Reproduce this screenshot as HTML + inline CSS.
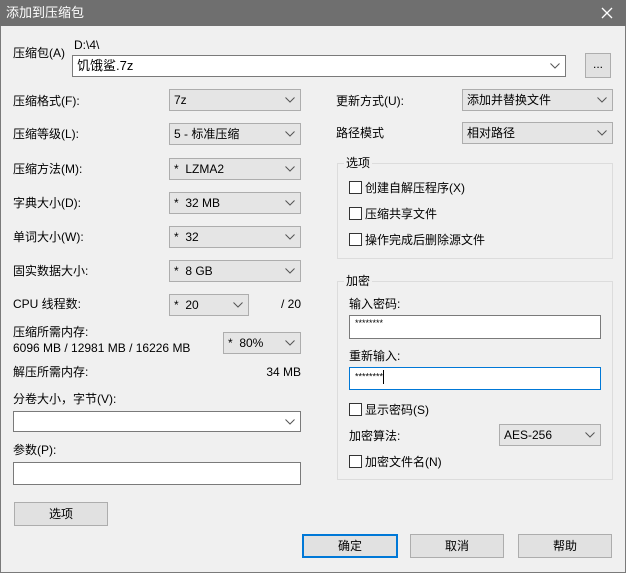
<!DOCTYPE html>
<html><head><meta charset="utf-8"><style>
*{margin:0;padding:0;box-sizing:border-box}
body{width:626px;height:573px;overflow:hidden;background:#f0f0f0;font-family:"Liberation Sans","Noto Sans CJK SC",sans-serif;font-size:12px;color:#000;position:relative}
.a{position:absolute;white-space:nowrap;line-height:14px}
.title{position:absolute;left:0;top:0;width:626px;height:26px;background:#6f6f6f;color:#fff;font-size:13px;line-height:26px;padding-left:6px}
.frame{position:absolute;left:0;top:26px;width:626px;height:547px;border:1px solid #7a7a7a;border-top:none}
.sel{position:absolute;height:22px;background:#e5e5e5;border:1px solid #adadad;line-height:20px;padding-left:4px}
.sel.w{background:#fff;border-color:#7a7a7a}
.sel svg{position:absolute;right:5px;top:7px}
.inp{position:absolute;height:23px;background:#fff;border:1px solid #7a7a7a}
.btn{position:absolute;height:24px;background:#e1e1e1;border:1px solid #adadad;text-align:center;line-height:22px}
.grp{position:absolute;border:1px solid #dcdcdc}
.cb{position:absolute;width:13px;height:13px;border:1px solid #333;background:#fff}
.r{text-align:right}
</style></head><body>
<div class="title">添加到压缩包</div>
<svg style="position:absolute;left:601px;top:7px" width="12" height="12"><path d="M1 1L11 11M11 1L1 11" stroke="#fff" stroke-width="1.3"/></svg>
<div class="frame"></div>

<div class="a" style="left:13px;top:46px">压缩包(A)</div>
<div class="a" style="left:74px;top:38px">D:\4\</div>
<div class="sel w" style="left:72px;top:55px;width:494px;height:22px;font-size:13px">饥饿鲨.7z<svg width="10" height="6"><path d="M0.5 .5L5 5L9.5 .5" fill="none" stroke="#555"/></svg></div>
<div class="btn" style="left:585px;top:53px;width:26px;height:25px;line-height:20px">...</div>

<div class="a" style="left:13px;top:94px">压缩格式(F):</div>
<div class="sel" style="left:169px;top:89px;width:132px">7z<svg width="10" height="6"><path d="M0.5 .5L5 5L9.5 .5" fill="none" stroke="#555"/></svg></div>
<div class="a" style="left:13px;top:127px">压缩等级(L):</div>
<div class="sel" style="left:169px;top:123px;width:132px">5 - 标准压缩<svg width="10" height="6"><path d="M0.5 .5L5 5L9.5 .5" fill="none" stroke="#555"/></svg></div>
<div class="a" style="left:13px;top:162px">压缩方法(M):</div>
<div class="sel" style="left:169px;top:158px;width:132px">*&nbsp; LZMA2<svg width="10" height="6"><path d="M0.5 .5L5 5L9.5 .5" fill="none" stroke="#555"/></svg></div>
<div class="a" style="left:13px;top:196px">字典大小(D):</div>
<div class="sel" style="left:169px;top:192px;width:132px">*&nbsp; 32 MB<svg width="10" height="6"><path d="M0.5 .5L5 5L9.5 .5" fill="none" stroke="#555"/></svg></div>
<div class="a" style="left:13px;top:230px">单词大小(W):</div>
<div class="sel" style="left:169px;top:226px;width:132px">*&nbsp; 32<svg width="10" height="6"><path d="M0.5 .5L5 5L9.5 .5" fill="none" stroke="#555"/></svg></div>
<div class="a" style="left:13px;top:264px">固实数据大小:</div>
<div class="sel" style="left:169px;top:260px;width:132px">*&nbsp; 8 GB<svg width="10" height="6"><path d="M0.5 .5L5 5L9.5 .5" fill="none" stroke="#555"/></svg></div>
<div class="a" style="left:13px;top:297px">CPU 线程数:</div>
<div class="sel" style="left:169px;top:294px;width:80px">*&nbsp; 20<svg width="10" height="6"><path d="M0.5 .5L5 5L9.5 .5" fill="none" stroke="#555"/></svg></div>
<div class="a r" style="left:261px;top:297px;width:40px">/ 20</div>
<div class="a" style="left:13px;top:325px">压缩所需内存:</div>
<div class="a" style="left:13px;top:341px">6096 MB / 12981 MB / 16226 MB</div>
<div class="sel" style="left:223px;top:332px;width:78px">*&nbsp; 80%<svg width="10" height="6"><path d="M0.5 .5L5 5L9.5 .5" fill="none" stroke="#555"/></svg></div>
<div class="a" style="left:13px;top:365px">解压所需内存:</div>
<div class="a r" style="left:241px;top:365px;width:60px">34 MB</div>
<div class="a" style="left:13px;top:392px">分卷大小，字节(V):</div>
<div class="sel w" style="left:13px;top:411px;width:288px;height:21px"><svg width="10" height="6"><path d="M0.5 .5L5 5L9.5 .5" fill="none" stroke="#555"/></svg></div>
<div class="a" style="left:13px;top:443px">参数(P):</div>
<div class="inp" style="left:13px;top:462px;width:288px;height:23px"></div>
<div class="btn" style="left:14px;top:502px;width:94px">选项</div>

<div class="a" style="left:336px;top:94px">更新方式(U):</div>
<div class="sel" style="left:462px;top:89px;width:151px">添加并替换文件<svg width="10" height="6"><path d="M0.5 .5L5 5L9.5 .5" fill="none" stroke="#555"/></svg></div>
<div class="a" style="left:336px;top:126px">路径模式</div>
<div class="sel" style="left:462px;top:122px;width:151px">相对路径<svg width="10" height="6"><path d="M0.5 .5L5 5L9.5 .5" fill="none" stroke="#555"/></svg></div>

<div class="grp" style="left:337px;top:163px;width:276px;height:96px"></div>
<div class="a" style="left:344px;top:156px;background:#f0f0f0;padding:0 2px">选项</div>
<div class="cb" style="left:349px;top:181px"></div><div class="a" style="left:365px;top:181px">创建自解压程序(X)</div>
<div class="cb" style="left:349px;top:207px"></div><div class="a" style="left:365px;top:207px">压缩共享文件</div>
<div class="cb" style="left:349px;top:233px"></div><div class="a" style="left:365px;top:233px">操作完成后删除源文件</div>

<div class="grp" style="left:337px;top:281px;width:276px;height:199px"></div>
<div class="a" style="left:344px;top:274px;background:#f0f0f0;padding:0 2px">加密</div>
<div class="a" style="left:349px;top:297px">输入密码:</div>
<div class="inp" style="left:349px;top:315px;width:252px;height:24px;padding:2px 5px;font-size:9px">********</div>
<div class="a" style="left:349px;top:349px">重新输入:</div>
<div class="inp" style="left:349px;top:367px;width:252px;height:23px;border-color:#0078d7;padding:2px 5px;font-size:9px">********<span style="display:inline-block;width:1px;height:14px;background:#000;vertical-align:middle"></span></div>
<div class="cb" style="left:349px;top:403px"></div><div class="a" style="left:365px;top:403px">显示密码(S)</div>
<div class="a" style="left:349px;top:429px">加密算法:</div>
<div class="sel" style="left:499px;top:424px;width:102px">AES-256<svg width="10" height="6"><path d="M0.5 .5L5 5L9.5 .5" fill="none" stroke="#555"/></svg></div>
<div class="cb" style="left:349px;top:455px"></div><div class="a" style="left:365px;top:455px">加密文件名(N)</div>

<div class="btn" style="left:302px;top:534px;width:96px;border:2px solid #0078d7;line-height:20px">确定</div>
<div class="btn" style="left:410px;top:534px;width:94px">取消</div>
<div class="btn" style="left:518px;top:534px;width:94px">帮助</div>
</body></html>
